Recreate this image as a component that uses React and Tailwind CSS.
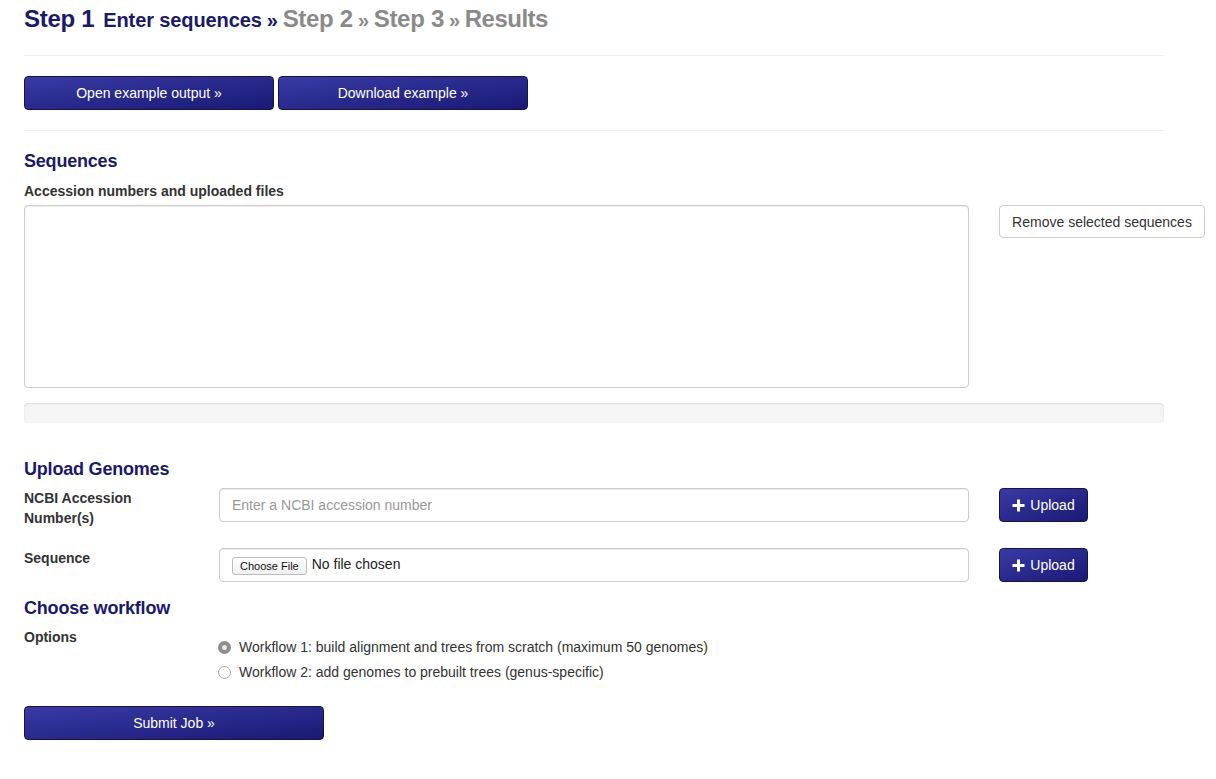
import React from "react";

const btn =
  "flex items-center justify-center rounded-[4px] border border-[#15154a] bg-gradient-to-br from-[#3a3aa6] to-[#191975] text-white text-[14px] leading-[20px]";

function Plus() {
  return (
    <svg width="13" height="13" viewBox="0 0 13 13" className="mr-[5px]">
      <rect x="5" y="0.5" width="3" height="12" fill="white" />
      <rect x="0.5" y="5" width="12" height="3" fill="white" />
    </svg>
  );
}

export default function App() {
  return (
    <div
      className="w-[1216px] min-h-[779px] bg-white text-[#333] text-[14px] leading-[20px] overflow-hidden"
      style={{ fontFamily: '"Liberation Sans", Arial, sans-serif' }}
    >
      <div className="pl-[24px] w-[1164px]">
        {/* Header */}
        <div className="pt-[6px] h-[55px] flex items-baseline text-[24px] leading-[26px] font-bold tracking-[-0.3px] whitespace-nowrap">
          <span className="text-[#191970]">Step 1</span>
          <span className="ml-[9px] text-[20px] tracking-[-0.1px] text-[#191970]">Enter sequences</span>
          <span className="mx-[5px] text-[20px] text-[#191970]">»</span>
          <span className="text-[#8a8a8a]">Step 2</span>
          <span className="mx-[5px] text-[20px] text-[#8a8a8a]">»</span>
          <span className="text-[#8a8a8a]">Step 3</span>
          <span className="mx-[5px] text-[20px] text-[#8a8a8a]">»</span>
          <span className="text-[#8a8a8a] tracking-[-0.5px]">Results</span>
        </div>
        <div className="border-t border-[#eeeeee]" />
        <div className="flex gap-[4px] mt-[20px]">
          <div className={btn + " w-[250px] h-[34px]"}>Open example output »</div>
          <div className={btn + " w-[250px] h-[34px]"}>Download example »</div>
        </div>
        <div className="border-t border-[#eeeeee] mt-[20px]" />

        {/* Sequences */}
        <div className="mt-[20px] text-[18px] leading-[20px] text-[#191970] font-bold tracking-[-0.2px]">Sequences</div>
        <div className="mt-[10px] font-bold">Accession numbers and uploaded files</div>
        <div className="flex mt-[4px]">
          <div className="w-[945px] shrink-0 h-[183px] border border-[#cccccc] rounded-[4px] shadow-[inset_0_1px_1px_rgba(0,0,0,0.075)]" />
          <div className="ml-[30px] w-[206px] shrink-0 h-[33px] border border-[#cccccc] rounded-[4px] flex items-center justify-center bg-white whitespace-nowrap">
            Remove selected sequences
          </div>
        </div>
        <div className="mt-[15px] h-[20px] w-[1140px] rounded-[4px] bg-[#f5f5f5] shadow-[inset_0_1px_2px_rgba(0,0,0,0.1)]" />

        {/* Upload Genomes */}
        <div className="mt-[36px] text-[18px] leading-[20px] text-[#191970] font-bold tracking-[-0.2px]">Upload Genomes</div>
        <div className="flex mt-[9px]">
          <div className="w-[195px] shrink-0 font-bold">
            NCBI Accession
            <br />
            Number(s)
          </div>
          <div className="w-[750px] shrink-0 h-[34px] border border-[#cccccc] rounded-[4px] flex items-center px-[12px] text-[#999999] shadow-[inset_0_1px_1px_rgba(0,0,0,0.075)]">
            Enter a NCBI accession number
          </div>
          <div className={btn + " ml-[30px] w-[89px] shrink-0 h-[34px]"}>
            <Plus />
            Upload
          </div>
        </div>
        <div className="flex mt-[20px]">
          <div className="w-[195px] shrink-0 font-bold">Sequence</div>
          <div className="w-[750px] shrink-0 h-[34px] border border-[#cccccc] rounded-[4px] flex items-center px-[12px] shadow-[inset_0_1px_1px_rgba(0,0,0,0.075)]">
            <span className="mt-[2px] inline-flex items-center h-[18px] px-[7px] border border-[#bdbdbd] rounded-[3px] bg-gradient-to-b from-white to-[#f0f0f0] text-[11px] leading-[14px] text-[#111]">
              Choose File
            </span>
            <span className="ml-[5px] text-[#222] -mt-[2px]">No file chosen</span>
          </div>
          <div className={btn + " ml-[30px] w-[89px] shrink-0 h-[34px]"}>
            <Plus />
            Upload
          </div>
        </div>

        {/* Choose workflow */}
        <div className="mt-[16px] text-[18px] leading-[20px] text-[#191970] font-bold tracking-[-0.2px]">Choose workflow</div>
        <div className="flex mt-[9px]">
          <div className="w-[194px] shrink-0 font-bold">Options</div>
          <div className="pt-[10px] flex flex-col gap-[5px]">
            <label className="flex items-center h-[20px]">
              <span className="w-[13px] h-[13px] rounded-full bg-[#8e8e8e] flex items-center justify-center">
                <span className="w-[5px] h-[5px] rounded-full bg-[#e8e8e8]" />
              </span>
              <span className="ml-[8px]">Workflow 1: build alignment and trees from scratch (maximum 50 genomes)</span>
            </label>
            <label className="flex items-center h-[20px]">
              <span className="w-[13px] h-[13px] rounded-full border border-[#a8a8a8] bg-white" />
              <span className="ml-[8px]">Workflow 2: add genomes to prebuilt trees (genus-specific)</span>
            </label>
          </div>
        </div>
        <div className={btn + " mt-[24px] w-[300px] h-[34px]"}>Submit Job »</div>
      </div>
    </div>
  );
}
